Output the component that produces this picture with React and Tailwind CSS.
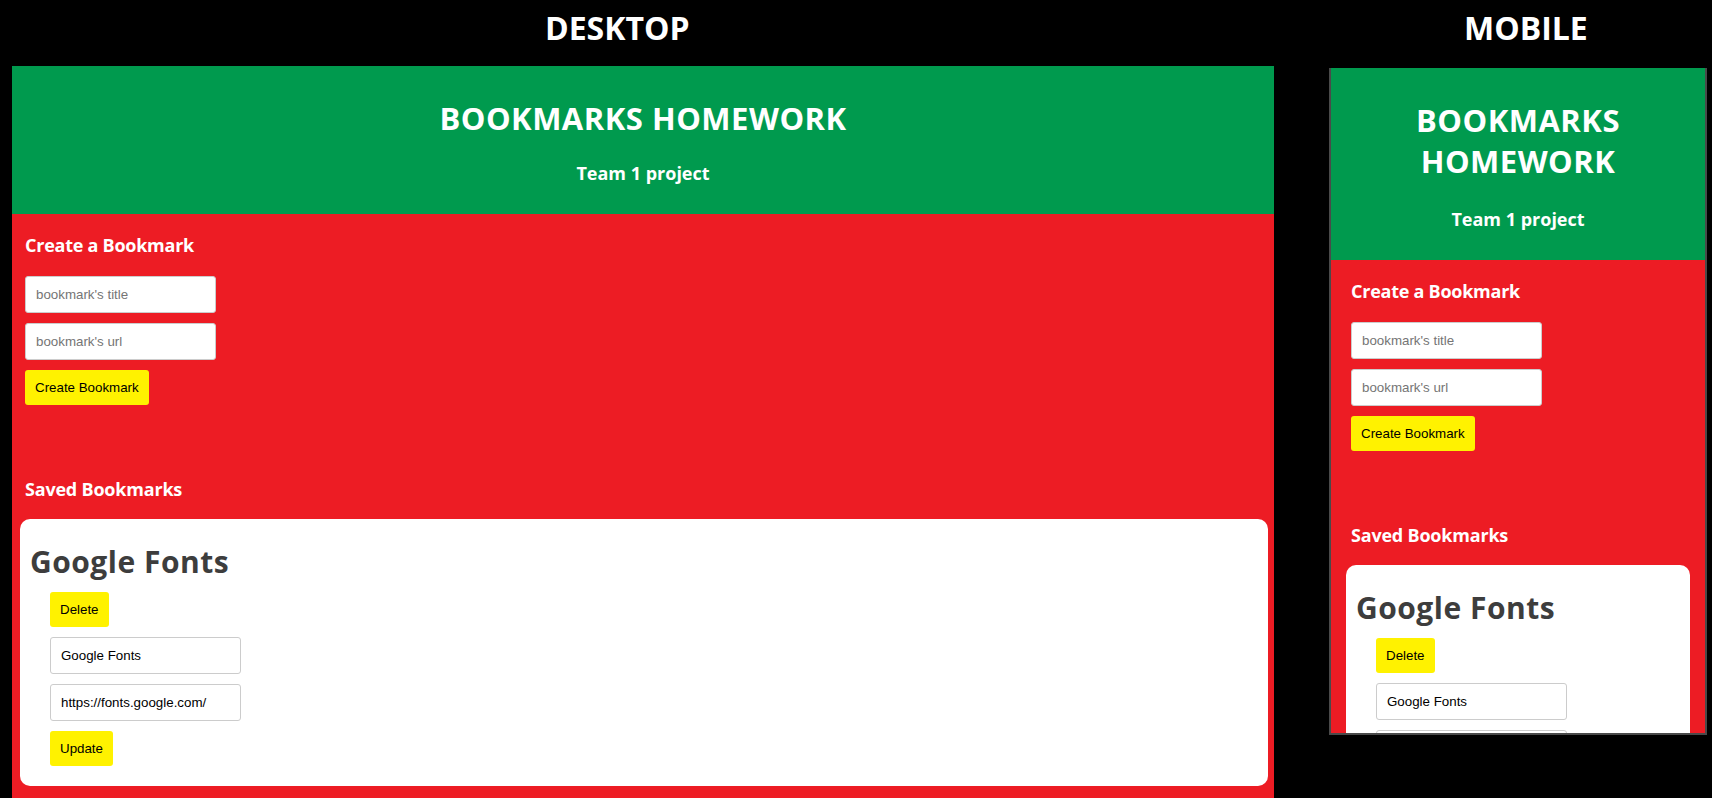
import React from "react";

const head = { fontFamily: '"Open Sans", "Noto Sans", sans-serif' };
const ui = { fontFamily: '"Liberation Sans", Arial, sans-serif' };

function Input({ placeholder, value }) {
  return (
    <input
      readOnly
      placeholder={placeholder}
      defaultValue={value}
      style={ui}
      className="block w-[191px] h-[37px] rounded-[3px] border border-[#cccccc] bg-white px-[10px] text-[13.33px] text-black placeholder:text-[#757575] outline-none"
    />
  );
}

function Btn({ children }) {
  return (
    <button
      style={ui}
      className="block h-[35px] rounded-[3px] bg-[#fff200] px-[10px] text-[13.33px] text-black"
    >
      {children}
    </button>
  );
}

function Header({ mobile }) {
  return (
    <div
      style={head}
      className={
        "shrink-0 bg-[#009a4e] text-white text-center font-bold " +
        (mobile ? "h-[192px] pt-[32px]" : "h-[148px] pt-[34px]")
      }
    >
      {mobile ? (
        <h1 className="text-[31px] leading-[41px] tracking-[0.5px] px-[60px]">BOOKMARKS HOMEWORK</h1>
      ) : (
        <h1 className="text-[31px] leading-[36px] tracking-[0.5px]">BOOKMARKS HOMEWORK</h1>
      )}
      <p className={"text-[18px] leading-6 " + (mobile ? "mt-[25px]" : "mt-[25px]")}>
        Team 1 project
      </p>
    </div>
  );
}

function Body({ mobile }) {
  return (
    <div className={"shrink-0 bg-[#ed1c24] pt-[19px] pb-[12px] " + (mobile ? "" : "flex-1")}>
      <div className={mobile ? "pl-[20px]" : "pl-[13px]"}>
        <h2 style={head} className="text-[18px] leading-6 font-bold tracking-[-0.25px] text-white">
          Create a Bookmark
        </h2>
        <div className="mt-[19px] flex flex-col gap-[10px]">
          <Input placeholder="bookmark's title" />
          <Input placeholder="bookmark's url" />
          <div>
            <Btn>Create Bookmark</Btn>
          </div>
        </div>
        <h2 style={head} className="mt-[72px] text-[18px] leading-6 font-bold tracking-[-0.2px] text-white">
          Saved Bookmarks
        </h2>
      </div>
      <div
        className={
          "mt-[18px] rounded-[10px] bg-white pt-[25px] pb-[20px] pl-[10px] " +
          (mobile ? "mx-[15px]" : "ml-[8px] mr-[6px]")
        }
      >
        <h1 style={head} className="text-[30px] leading-[36px] font-bold tracking-[0.5px] text-[#3d3d3d]">
          Google Fonts
        </h1>
        <div className="mt-[12px] pl-[20px] flex flex-col gap-[10px]">
          <div>
            <Btn>Delete</Btn>
          </div>
          <Input value="Google Fonts" />
          <Input value="https://fonts.google.com/" />
          <div>
            <Btn>Update</Btn>
          </div>
        </div>
      </div>
    </div>
  );
}

export default function App() {
  return (
    <div className="w-[1712px] h-[798px] overflow-hidden bg-black flex">
      <div className="ml-[12px] w-[1262px] flex flex-col">
        <div className="shrink-0 h-[66px] pt-[8px] pl-[533px]">
          <span style={head} className="block text-[32px] leading-[40px] font-bold text-white">
            DESKTOP
          </span>
        </div>
        <Header />
        <Body />
      </div>
      <div className="ml-[55px] w-[378px] flex flex-col">
        <div className="shrink-0 h-[68px] pt-[8px] pl-[135px]">
          <span style={head} className="block text-[32px] leading-[40px] font-bold text-white">
            MOBILE
          </span>
        </div>
        <div className="h-[667px] shrink-0 overflow-hidden border-x-2 border-b-2 border-[#4a4a4a] flex flex-col">
          <Header mobile />
          <Body mobile />
        </div>
      </div>
    </div>
  );
}
